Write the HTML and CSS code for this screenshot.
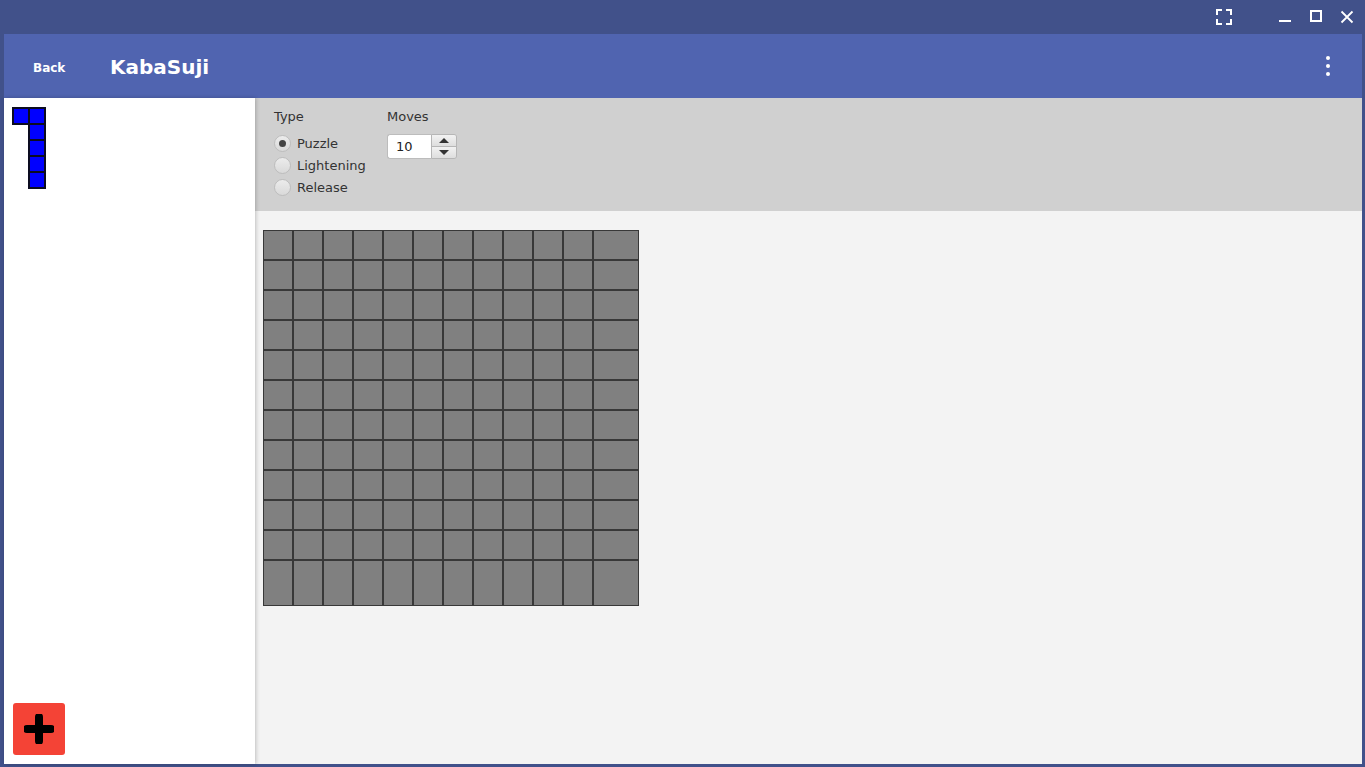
FILE: index.html
```html
<!DOCTYPE html>
<html>
<head>
<meta charset="utf-8">
<title>KabaSuji</title>
<link rel="stylesheet" href="styles.css">
</head>
<body>
<div class="window">
  <div class="titlebar">
    <svg class="tb-icon fs" width="16" height="16" viewBox="0 0 16 16"><path d="M1 6V1h5M10 1h5v5M15 10v5h-5M6 15H1v-5" fill="none" stroke="#fff" stroke-width="2"/></svg>
    <svg class="tb-icon min" width="14" height="14" viewBox="0 0 14 14"><path d="M1 11h12" stroke="#fff" stroke-width="2"/></svg>
    <svg class="tb-icon max" width="14" height="14" viewBox="0 0 14 14"><rect x="2" y="2" width="10" height="10" fill="none" stroke="#fff" stroke-width="2"/></svg>
    <svg class="tb-icon close" width="14" height="14" viewBox="0 0 14 14"><path d="M1.5 1.5l11 11M12.5 1.5l-11 11" stroke="#fff" stroke-width="1.8"/></svg>
  </div>
  <div class="frame">
    <div class="app">
      <div class="header">
        <span class="back">Back</span>
        <span class="title">KabaSuji</span>
        <span class="kebab"><i></i><i></i><i></i></span>
      </div>
      <div class="main">
        <div class="sidebar">
          <svg class="piece" width="34" height="82" viewBox="0 0 34 82">
            <g fill="#0000ff" stroke="#0c0c20" stroke-width="2">
              <rect x="1" y="1" width="16" height="16"/>
              <rect x="17" y="1" width="16" height="16"/>
              <rect x="17" y="17" width="16" height="16"/>
              <rect x="17" y="33" width="16" height="16"/>
              <rect x="17" y="49" width="16" height="16"/>
              <rect x="17" y="65" width="16" height="16"/>
            </g>
          </svg>
          <div class="spacer"></div>
          <div class="add-btn">
            <svg width="30" height="30" viewBox="0 0 30 30"><path d="M15 3v24M3 15h24" stroke="#000" stroke-width="8" stroke-linecap="round"/></svg>
          </div>
        </div>
        <div class="content">
          <div class="controls">
            <div class="group type">
              <div class="label">Type</div>
              <label class="radio"><span class="dot checked"></span>Puzzle</label>
              <label class="radio"><span class="dot"></span>Lightening</label>
              <label class="radio"><span class="dot"></span>Release</label>
            </div>
            <div class="group moves">
              <div class="label">Moves</div>
              <div class="spinner">
                <div class="spin-input">10</div>
                <div class="spin-btns">
                  <div class="sb up"><span class="tri-up"></span></div>
                  <div class="sb down"><span class="tri-down"></span></div>
                </div>
              </div>
            </div>
          </div>
          <div class="board-area">
            <div class="board" id="board"></div>
          </div>
        </div>
      </div>
    </div>
  </div>
</div>
<script src="script.js"></script>
</body>
</html>
```
FILE: styles.css
```css
* { box-sizing: border-box; }
html, body { margin: 0; padding: 0; }
body {
  background: #41518a;
  font-family: "DejaVu Sans", sans-serif;
  width: 1365px;
  height: 767px;
  overflow: hidden;
}
.window {
  display: flex;
  flex-direction: column;
  height: 767px;
}
.titlebar {
  height: 34px;
  display: flex;
  align-items: flex-start;
  justify-content: flex-end;
  padding-right: 11px;
}
.tb-icon { display: block; margin-top: 9px; }
.titlebar .fs { margin-right: 46px; position: relative; left: -2px; }
.min { margin-top: 10px; margin-right: 16px; position: relative; left: -2px; }
.max { margin-top: 9px; margin-right: 16px; position: relative; left: -1px; }
.close { margin-top: 10px; }
.frame {
  flex: 1;
  padding: 0 3px 3px 4px;
  display: flex;
  min-height: 0;
}
.app {
  flex: 1;
  display: flex;
  flex-direction: column;
  min-height: 0;
}
.header {
  height: 64px;
  background: #5064b0;
  display: flex;
  align-items: center;
  color: #fff;
  font-weight: bold;
  flex-shrink: 0;
}
.back {
  font-size: 12px;
  margin-left: 29px;
  width: 77px;
  margin-top: 3px;
}
.title {
  font-size: 20px;
  margin-top: 1px;
}
.kebab {
  margin-left: auto;
  margin-right: 32px;
  display: flex;
  flex-direction: column;
  gap: 4px;
}
.kebab i {
  display: block;
  width: 4px;
  height: 4px;
  border-radius: 50%;
  background: #fff;
}
.main {
  flex: 1;
  display: flex;
  min-height: 0;
}
.sidebar {
  width: 251px;
  background: #fff;
  display: flex;
  flex-direction: column;
  padding: 9px 0 9px 8px;
  position: relative;
  z-index: 2;
  box-shadow: 1px 0 4px rgba(0,0,0,0.22);
}
.piece { display: block; }
.spacer { flex: 1; }
.add-btn {
  width: 52px;
  height: 52px;
  margin-left: 1px;
  background: #f44336;
  border-radius: 3px;
  display: flex;
  align-items: center;
  justify-content: center;
}
.add-btn svg { display: block; }
.content {
  flex: 1;
  display: flex;
  flex-direction: column;
  background: #f3f3f3;
}
.controls {
  height: 113px;
  background: #d0d0d0;
  display: flex;
  padding: 11px 0 0 19px;
  font-size: 13px;
  color: #333;
  flex-shrink: 0;
}
.label { height: 23px; line-height: 16px; }
.group.type { width: 113px; }
.radio {
  display: flex;
  align-items: center;
  height: 22px;
}
.dot {
  width: 17px;
  height: 17px;
  border-radius: 50%;
  border: 1px solid #bdbdbd;
  background: linear-gradient(#ececec, #d9d9d9);
  margin-right: 6px;
  display: flex;
  align-items: center;
  justify-content: center;
}
.dot.checked::after {
  content: "";
  width: 7px;
  height: 7px;
  border-radius: 50%;
  background: #444;
}
.spinner {
  display: flex;
  height: 25px;
  margin-top: 2px;
}
.spin-input {
  width: 44px;
  height: 25px;
  background: #fff;
  border: 1px solid #bcbcbc;
  border-right: none;
  border-radius: 3px 0 0 3px;
  padding-left: 8px;
  line-height: 24px;
  color: #222;
}
.spin-btns {
  width: 26px;
  display: flex;
  flex-direction: column;
  border: 1px solid #b6b6b6;
  border-radius: 0 3px 3px 0;
  overflow: hidden;
}
.sb {
  flex: 1;
  background: linear-gradient(#f2f2f2, #dedede);
  display: flex;
  align-items: center;
  justify-content: center;
}
.sb.up { border-bottom: 1px solid #b6b6b6; }
.tri-up {
  width: 0; height: 0;
  border-left: 5px solid transparent;
  border-right: 5px solid transparent;
  border-bottom: 5px solid #333;
}
.tri-down {
  width: 0; height: 0;
  border-left: 5px solid transparent;
  border-right: 5px solid transparent;
  border-top: 5px solid #333;
}
.board-area {
  flex: 1;
  padding: 19px 0 0 8px;
}
.board {
  display: grid;
  grid-template-columns: repeat(11, 30px) 46px;
  grid-template-rows: repeat(11, 30px) 46px;
  width: 376px;
}
.cell {
  background: #808080;
  border: 1px solid #383838;
}
```
FILE: script.js
```js
var b = document.getElementById('board');
for (var i = 0; i < 144; i++) {
  var d = document.createElement('div');
  d.className = 'cell';
  b.appendChild(d);
}
```
